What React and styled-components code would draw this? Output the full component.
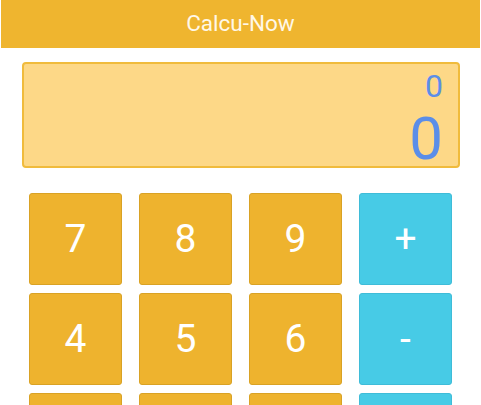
import React, { useState } from "react";
import styled, { createGlobalStyle } from "styled-components";

const GlobalStyle = createGlobalStyle`
  body {
    margin: 0;
    background: #ffffff;
    font-family: Roboto, "Liberation Sans", sans-serif;
  }
`;

const Header = styled.header`
  margin: 0 1px;
  height: 48px;
  background: #efb52f;
  color: #fff8e8;
  font-size: 22.5px;
  display: flex;
  align-items: center;
  justify-content: center;
  padding-bottom: 2px;
  box-sizing: border-box;
`;

const Display = styled.div`
  margin: 14px 21px 0 22px;
  height: 106px;
  box-sizing: border-box;
  background: #fdd887;
  border: 2px solid #f0bb3c;
  border-radius: 4px;
  padding: 4px 15px 0 0;
  display: flex;
  flex-direction: column;
  align-items: flex-end;
  color: #5b8ee8;
`;

const Expression = styled.div`
  font-size: 32px;
  line-height: 36px;
`;

const Result = styled.div`
  font-size: 60px;
  line-height: 60px;
  margin-top: 5px;
`;

const Keypad = styled.div`
  display: grid;
  grid-template-columns: repeat(4, 93px);
  grid-auto-rows: 92px;
  column-gap: 17px;
  row-gap: 8px;
  margin: 25px 0 0 29px;
`;

const Key = styled.button`
  border: 1px solid ${(p) => (p.$op ? "#3fbcd8" : "#d9a225")};
  border-radius: 3px;
  background: ${(p) => (p.$op ? "#47cbe6" : "#eeb32e")};
  color: #ffffff;
  font-family: Roboto, "Liberation Sans", sans-serif;
  font-size: 39px;
  padding: 0;
  cursor: pointer;
`;

const keys = [
  ["7"], ["8"], ["9"], ["+", true],
  ["4"], ["5"], ["6"], ["-", true],
  ["1"], ["2"], ["3"], ["*", true],
];

const App = () => {
  const [expr] = useState("0");
  const [result] = useState("0");

  return (
    <>
      <GlobalStyle />
      <Header>Calcu-Now</Header>
      <Display>
        <Expression>{expr}</Expression>
        <Result>{result}</Result>
      </Display>
      <Keypad>
        {keys.map(([label, op]) => (
          <Key key={label} $op={op}>
            {label}
          </Key>
        ))}
      </Keypad>
    </>
  );
};

export default App;
